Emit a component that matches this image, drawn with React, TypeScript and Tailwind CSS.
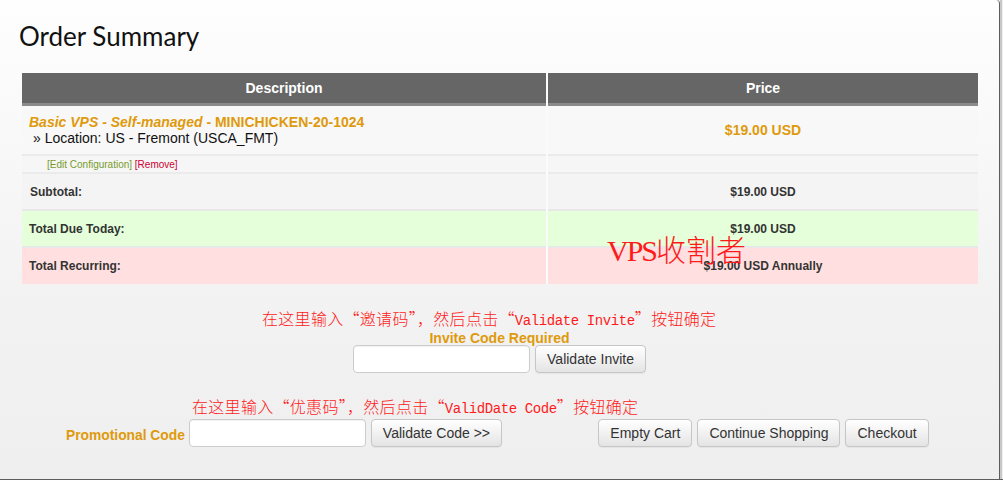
import React from "react";

const ORANGE = "text-[#df9a0c]";

function Btn({ children }: { children: React.ReactNode }) {
  return (
    <button className="h-[28px] px-[11px] rounded-[4px] border border-[#c6c6c6] bg-gradient-to-b from-[#ffffff] to-[#e4e4e4] text-[14px] text-[#333] leading-none shadow-[0_1px_1px_rgba(0,0,0,0.05)]">
      {children}
    </button>
  );
}

function Input() {
  return (
    <div className="h-[28px] w-[177px] rounded-[4px] border border-[#cccccc] bg-white shadow-[inset_0_1px_1px_rgba(0,0,0,0.06)]" />
  );
}

export default function App() {
  const sans = { fontFamily: '"Liberation Sans", Arial, sans-serif' };
  return (
    <div
      className="relative w-[1003px] h-[480px] overflow-hidden bg-[#efefef]"
      style={sans}
    >
      <div className="flex h-[479px]">
        <div className="w-[1000px] h-full border-r border-[#5c5c5c] rounded-tr-[4px] bg-gradient-to-b from-[#fefefe] via-[#f2f2f2] via-65% to-[#efefef]">
          <h1
            className="pl-[19px] pt-[20px] text-[26px] leading-[32px] text-[#111]"
            style={{ fontFamily: "Lato, sans-serif" }}
          >
            Order Summary
          </h1>

          <div className="ml-[22px] mt-[21px] w-[956px] grid grid-cols-[524px_430px] gap-x-[2px] bg-[#fbfbfb]">
            <div className="h-[33px] bg-[#666] border-b-[3px] border-[#8a8a8a] flex items-center justify-center text-white font-bold text-[14px]">
              Description
            </div>
            <div className="h-[33px] bg-[#666] border-b-[3px] border-[#8a8a8a] flex items-center justify-center text-white font-bold text-[14px]">
              Price
            </div>

            <div className="h-[50px] bg-[#f8f8f8] border-b-2 border-[#ebebeb] pl-[7px] pt-[8px] text-[14px] leading-[16px]">
              <div className={`${ORANGE} font-bold`}>
                <i>Basic VPS - Self-managed</i> - MINICHICKEN-20-1024
              </div>
              <div className="text-[#111] pl-[4px]">» Location: US - Fremont (USCA_FMT)</div>
            </div>
            <div className={`h-[50px] bg-[#f8f8f8] border-b-2 border-[#ebebeb] flex items-center justify-center font-bold text-[14px] ${ORANGE}`}>
              $19.00 USD
            </div>

            <div className="h-[18px] bg-[#f6f6f6] border-b-2 border-[#ebebeb] pl-[25px] text-[10px] leading-[17px]">
              <span className="text-[#779b2a]">[Edit Configuration]</span>{" "}
              <span className="text-[#cc0033]">[Remove]</span>
            </div>
            <div className="h-[18px] bg-[#f6f6f6] border-b-2 border-[#ebebeb]" />

            <div className="h-[37px] bg-[#f4f4f4] border-b-2 border-[#e8e8e8] flex items-center pl-[8px] font-bold text-[12px] text-[#333]">
              Subtotal:
            </div>
            <div className="h-[37px] bg-[#f4f4f4] border-b-2 border-[#e8e8e8] flex items-center justify-center font-bold text-[12px] text-[#333]">
              $19.00 USD
            </div>

            <div className="h-[37px] bg-[#e4ffd9] border-b-2 border-[#e8e8e8] flex items-center pl-[7px] font-bold text-[12px] text-[#333]">
              Total Due Today:
            </div>
            <div className="h-[37px] bg-[#e4ffd9] border-b-2 border-[#e8e8e8] flex items-center justify-center font-bold text-[12px] text-[#333]">
              $19.00 USD
            </div>

            <div className="h-[36px] bg-[#ffdfdf] flex items-center pl-[7px] font-bold text-[12px] text-[#333]">
              Total Recurring:
            </div>
            <div className="h-[36px] bg-[#ffdfdf] flex items-center justify-center font-bold text-[12px] text-[#333]">
              $19.00 USD Annually
            </div>
          </div>

          <div className="mt-[26px] pl-[262px] h-[16px] leading-[16px] text-[16px] tracking-[0.3px] text-[#ff1a1a] whitespace-nowrap font-light" style={{ fontFamily: '"Noto Sans CJK SC", sans-serif' }}>
            在这里输入“邀请码”，然后点击“<span className="text-[14px] tracking-[-0.4px] font-normal" style={{ fontFamily: '"Liberation Mono", monospace' }}>Validate Invite</span>”按钮确定
          </div>

          <div className={`mt-[5px] text-center font-bold text-[14px] leading-[15px] ${ORANGE}`}>
            Invite Code Required
          </div>
          <div className="-mt-[1px] flex justify-center gap-[5px]">
            <Input />
            <Btn>Validate Invite</Btn>
          </div>

          <div className="mt-[25px] pl-[192px] h-[16px] leading-[16px] text-[16px] tracking-[0.3px] text-[#ff1a1a] whitespace-nowrap font-light" style={{ fontFamily: '"Noto Sans CJK SC", sans-serif' }}>
            在这里输入“优惠码”，然后点击“<span className="text-[14px] tracking-[-0.4px] font-normal" style={{ fontFamily: '"Liberation Mono", monospace' }}>ValidDate Code</span>”按钮确定
          </div>

          <div className="mt-[5px] ml-[22px] w-[956px] grid grid-cols-[524px_432px]">
            <div className="flex justify-center items-center">
              <span className={`font-bold text-[13.8px] mr-[4px] mt-[7px] ${ORANGE}`}>Promotional Code</span>
              <Input />
              <span className="w-[5px]" />
              <Btn>Validate Code &gt;&gt;</Btn>
            </div>
            <div className="flex justify-center gap-[5px] pl-[3px]">
              <Btn>Empty Cart</Btn>
              <Btn>Continue Shopping</Btn>
              <Btn>Checkout</Btn>
            </div>
          </div>
        </div>
        <div className="w-[2px] h-full bg-[#c8c8c8]" />
      </div>
      <div className="h-[1px] bg-[#5c5c5c]" />

      <div className="absolute left-[607px] top-[230px] text-[30px] leading-[36px] text-[#ff1a1a] whitespace-nowrap">
        <span className="tracking-[-2px]" style={{ fontFamily: '"Liberation Serif", serif' }}>VPS</span>
        <span className="font-light" style={{ fontFamily: '"Noto Sans CJK SC", sans-serif' }}>收割者</span>
      </div>
    </div>
  );
}
